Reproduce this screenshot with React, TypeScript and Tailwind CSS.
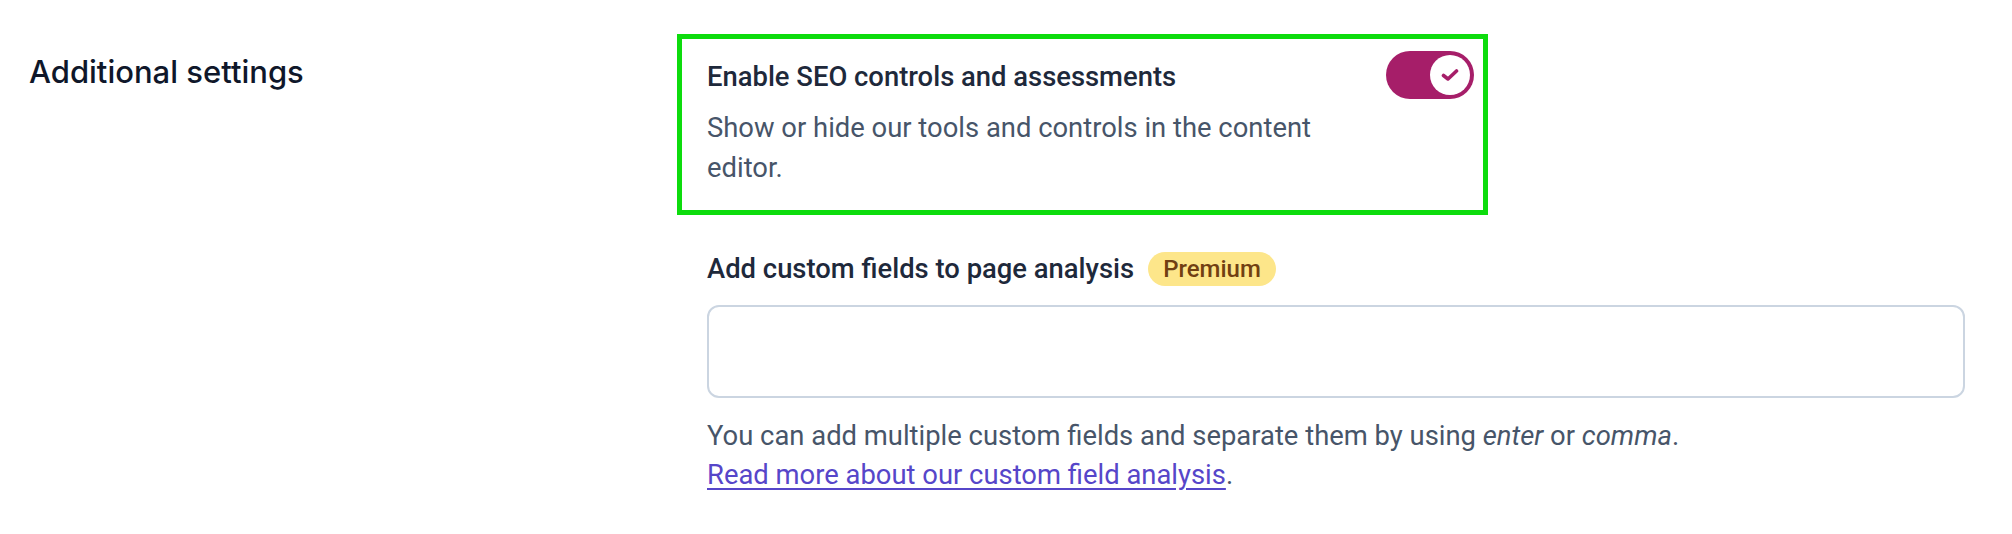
export default function App() {
  return (
    <div className="min-h-[534px] w-[2012px] bg-white font-['Roboto',sans-serif] text-[27.4px] leading-[40px] text-[#1e293b]">
      <div className="flex pl-[29px] pt-[34px]">
        {/* Left column */}
        <div className="w-[648px] shrink-0 pt-[18px]">
          <h2 className="font-['Inter',sans-serif] text-[31px] font-medium leading-[40px] text-[#0f172a]">Additional settings</h2>
        </div>

        {/* Right column */}
        <div className="flex flex-col">
          <div className="w-[811px] border-[5px] border-[#0ddc0d] pb-[22px] pl-[25px] pr-[9px] pt-[12px]">
            <div className="flex items-start justify-between">
              <div className="pt-[6px]">
                <div className="font-medium text-[#1e293b]">Enable SEO controls and assessments</div>
                <p className="mt-[11px] w-[640px] text-[#475569]">
                  Show or hide our tools and controls in the content editor.
                </p>
              </div>
              <button
                type="button"
                className="flex h-[48px] w-[88px] shrink-0 items-center justify-end rounded-full bg-[#a61e69] p-[4px]"
              >
                <span className="flex h-[40px] w-[40px] items-center justify-center rounded-full bg-white">
                  <svg width="18" height="14" viewBox="0 0 18 14" fill="none">
                    <path d="M2.5 7.5 L7 11 L15.5 3" stroke="#a61e69" strokeWidth="3.6" strokeLinecap="round" strokeLinejoin="round" />
                  </svg>
                </span>
              </button>
            </div>
          </div>

          <div className="pl-[30px] pt-[34px]">
            <div className="flex items-center gap-[14px]">
              <label className="font-medium text-[#1e293b]">Add custom fields to page analysis</label>
              <span className="flex h-[34px] items-center rounded-full bg-[#fde68a] px-[15px] text-[24px] font-medium leading-[34px] text-[#713f12]">
                Premium
              </span>
            </div>
            <div className="mt-[16px] h-[93px] w-[1258px] rounded-[12px] border-2 border-[#cbd5e1] bg-white" />
            <p className="mt-[19px] leading-[39px] text-[#475569]">
              You can add multiple custom fields and separate them by using <em>enter</em> or <em>comma</em>.
              <br />
              <a href="#" className="text-[#5646c9] underline underline-offset-[4px]">
                Read more about our custom field analysis
              </a>
              .
            </p>
          </div>
        </div>
      </div>
    </div>
  );
}
